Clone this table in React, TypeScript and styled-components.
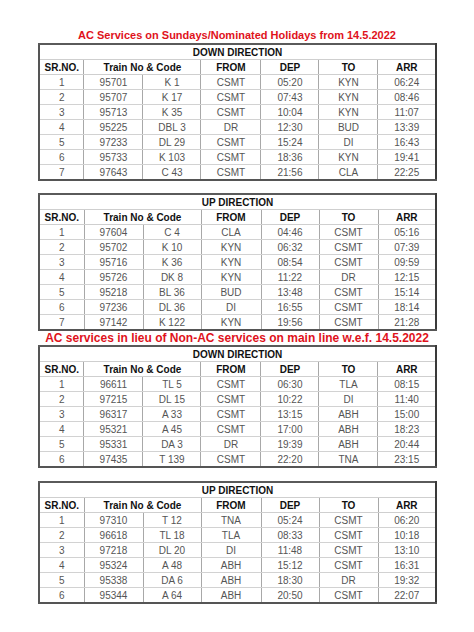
import React from 'react'
import styled, { createGlobalStyle } from 'styled-components'

type Row = [string, string, string, string, string, string, string]

const COLS = [45, 59, 58, 60, 58, 59, 58]

const SUNDAY_DOWN: Row[] = [
  ['1', '95701', 'K 1', 'CSMT', '05:20', 'KYN', '06:24'],
  ['2', '95707', 'K 17', 'CSMT', '07:43', 'KYN', '08:46'],
  ['3', '95713', 'K 35', 'CSMT', '10:04', 'KYN', '11:07'],
  ['4', '95225', 'DBL 3', 'DR', '12:30', 'BUD', '13:39'],
  ['5', '97233', 'DL 29', 'CSMT', '15:24', 'DI', '16:43'],
  ['6', '95733', 'K 103', 'CSMT', '18:36', 'KYN', '19:41'],
  ['7', '97643', 'C 43', 'CSMT', '21:56', 'CLA', '22:25'],
]

const SUNDAY_UP: Row[] = [
  ['1', '97604', 'C 4', 'CLA', '04:46', 'CSMT', '05:16'],
  ['2', '95702', 'K 10', 'KYN', '06:32', 'CSMT', '07:39'],
  ['3', '95716', 'K 36', 'KYN', '08:54', 'CSMT', '09:59'],
  ['4', '95726', 'DK 8', 'KYN', '11:22', 'DR', '12:15'],
  ['5', '95218', 'BL 36', 'BUD', '13:48', 'CSMT', '15:14'],
  ['6', '97236', 'DL 36', 'DI', '16:55', 'CSMT', '18:14'],
  ['7', '97142', 'K 122', 'KYN', '19:56', 'CSMT', '21:28'],
]

const MAIN_DOWN: Row[] = [
  ['1', '96611', 'TL 5', 'CSMT', '06:30', 'TLA', '08:15'],
  ['2', '97215', 'DL 15', 'CSMT', '10:22', 'DI', '11:40'],
  ['3', '96317', 'A 33', 'CSMT', '13:15', 'ABH', '15:00'],
  ['4', '95321', 'A 45', 'CSMT', '17:00', 'ABH', '18:23'],
  ['5', '95331', 'DA 3', 'DR', '19:39', 'ABH', '20:44'],
  ['6', '97435', 'T 139', 'CSMT', '22:20', 'TNA', '23:15'],
]

const MAIN_UP: Row[] = [
  ['1', '97310', 'T 12', 'TNA', '05:24', 'CSMT', '06:20'],
  ['2', '96618', 'TL 18', 'TLA', '08:33', 'CSMT', '10:18'],
  ['3', '97218', 'DL 20', 'DI', '11:48', 'CSMT', '13:10'],
  ['4', '95324', 'A 48', 'ABH', '15:12', 'CSMT', '16:31'],
  ['5', '95338', 'DA 6', 'ABH', '18:30', 'DR', '19:32'],
  ['6', '95344', 'A 64', 'ABH', '20:50', 'CSMT', '22:07'],
]

const Global = createGlobalStyle`
  html, body { margin: 0; padding: 0; background: #fff; }
  body { font-family: "Liberation Sans", Arial, sans-serif; }
`

const Page = styled.div`
  width: 474px;
  padding-top: 28px;
  display: flex;
  flex-direction: column;
  align-items: center;
`

const Title = styled.div<{ $size: number; $height: number }>`
  color: #e0121b;
  font-weight: bold;
  font-size: ${p => p.$size}px;
  line-height: ${p => p.$height}px;
  height: ${p => p.$height}px;
  text-align: center;
  white-space: nowrap;
`

const Gap = styled.div<{ $h: number }>`
  height: ${p => p.$h}px;
`

const Table = styled.table`
  width: 397px;
  border-collapse: collapse;
  table-layout: fixed;
  margin-left: 1px;
  td, th {
    height: 14px;
    padding: 0;
    text-align: center;
    vertical-align: middle;
    line-height: 13px;
    white-space: nowrap;
  }
  tr:last-child td { border-bottom: 2px solid #555; }
  tr td:first-child, tr th:first-child { border-left: 2px solid #555; }
  tr td:last-child, tr th:last-child { border-right: 2px solid #3a3a3a; }
`

const DirectionCell = styled.th`
  && {
    border-top: 2px solid #5a5a5a;
    border-right: none;
    border-bottom: 1px solid #cfcfcf;
  }
  font-size: 10px;
  font-weight: bold;
  color: #111;
`

const HeadCell = styled.th`
  font-size: 10px;
  font-weight: bold;
  color: #111;
  border-bottom: 1px solid #cfcfcf;
  border-left: 1px solid #a8a8a8;
  border-right: 1px solid #a8a8a8;
`

const Cell = styled.td<{ $soft?: boolean }>`
  font-size: 10px;
  color: #555;
  border-bottom: 1px solid #d2d2d2;
  border-left: 1px solid ${p => (p.$soft ? '#c4c4c4' : '#a8a8a8')};
  border-right: 1px solid #a8a8a8;
`

const Timetable = ({ direction, rows }: { direction: string; rows: Row[] }) => (
  <Table>
    <colgroup>
      {COLS.map((w, i) => <col key={i} style={{ width: w }} />)}
    </colgroup>
    <thead>
      <tr>
        <DirectionCell colSpan={7}>{direction}</DirectionCell>
      </tr>
      <tr>
        <HeadCell>SR.NO.</HeadCell>
        <HeadCell colSpan={2}>Train No &amp; Code</HeadCell>
        <HeadCell>FROM</HeadCell>
        <HeadCell>DEP</HeadCell>
        <HeadCell>TO</HeadCell>
        <HeadCell>ARR</HeadCell>
      </tr>
    </thead>
    <tbody>
      {rows.map(r => (
        <tr key={r[0]}>
          {r.map((v, i) => <Cell key={i} $soft={i === 2}>{v}</Cell>)}
        </tr>
      ))}
    </tbody>
  </Table>
)

export default function App() {
  return (
    <Page>
      <Global />
      <Title $size={11} $height={15}>AC Services on Sundays/Nominated Holidays from 14.5.2022</Title>
      <Timetable direction="DOWN DIRECTION" rows={SUNDAY_DOWN} />
      <Gap $h={12} />
      <Timetable direction="UP DIRECTION" rows={SUNDAY_UP} />
      <Title $size={12} $height={14}>AC services in lieu of Non-AC services on main line w.e.f. 14.5.2022</Title>
      <Timetable direction="DOWN DIRECTION" rows={MAIN_DOWN} />
      <Gap $h={13} />
      <Timetable direction="UP DIRECTION" rows={MAIN_UP} />
    </Page>
  )
}
